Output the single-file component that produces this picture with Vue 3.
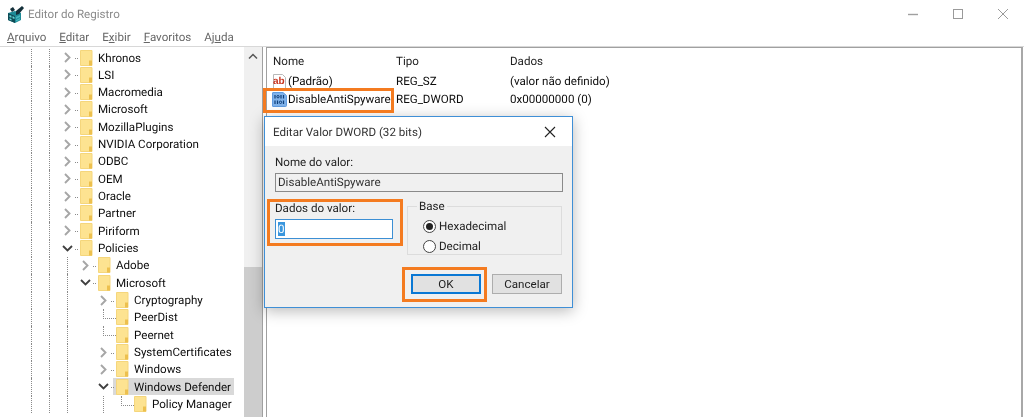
<script setup>
const menus = [
  { key: 'A', rest: 'rquivo' },
  { key: 'E', rest: 'ditar' },
  { pre: 'E', key: 'x', rest: 'ibir' },
  { key: 'F', rest: 'avoritos' },
  { pre: 'Aj', key: 'u', rest: 'da' }
]
const base = [true, true]
const sub = [true, true, true]
const deep = [true, true, true, false]
const rows = [
  { name: 'Khronos', g: base, c: 'r' },
  { name: 'LSI', g: base, c: 'r' },
  { name: 'Macromedia', g: base, c: 'r' },
  { name: 'Microsoft', g: base, c: 'r' },
  { name: 'MozillaPlugins', g: base, c: 'r' },
  { name: 'NVIDIA Corporation', g: base, c: 'r' },
  { name: 'ODBC', g: base, c: 'r' },
  { name: 'OEM', g: base, c: 'r' },
  { name: 'Oracle', g: base, c: 'r' },
  { name: 'Partner', g: base, c: 'r' },
  { name: 'Piriform', g: base, c: 'r' },
  { name: 'Policies', g: base, c: 'd' },
  { name: 'Adobe', g: sub, c: 'r' },
  { name: 'Microsoft', g: sub, c: 'd' },
  { name: 'Cryptography', g: deep, c: 'r' },
  { name: 'PeerDist', g: deep, c: 'l' },
  { name: 'Peernet', g: deep, c: 'l' },
  { name: 'SystemCertificates', g: deep, c: 'r' },
  { name: 'Windows', g: deep, c: 'r' },
  { name: 'Windows Defender', g: deep, c: 'd', sel: true },
  { name: 'Policy Manager', g: [true, true, true, false, true], c: 'l' }
]
</script>

<template>
  <div class="win">
    <header class="title">
      <svg class="app-icon" width="18" height="18" viewBox="0 0 18 18">
        <path d="M1 8l7-2 6 2v7l-6 3-7-3z" fill="#1d8a96" />
        <path d="M1 8l7 3v7l-7-3z" fill="#0e4a55" />
        <path d="M2.500 10l2 .8v2l-2-.8zM5.500 11.200l2 .8v2l-2-.8zM2.500 13.200l2 .8v1.600l-2-.8z" fill="#63d6d6" />
        <path d="M9 12l4-2v2l-4 2zM9 15l4-2v1.500l-4 2z" fill="#45b6bd" />
        <path d="M9 6l6-5 2 2-5 6-3 1z" fill="#14303a" />
        <path d="M3 4l3-2 2 3-3 2z" fill="#14303a" />
      </svg>
      <span class="title-text">Editor do Registro</span>
      <div class="controls">
        <svg width="12" height="12" viewBox="0 0 12 12"><path d="M1 6.500h10" stroke="#a0a0a0" stroke-width="1.400" /></svg>
        <svg width="12" height="12" viewBox="0 0 12 12"><rect x="1.500" y="1.500" width="9" height="9" fill="none" stroke="#9a9a9a" /></svg>
        <svg width="12" height="12" viewBox="0 0 12 12"><path d="M1 1l10 10M11 1L1 11" stroke="#9a9a9a" /></svg>
      </div>
    </header>

    <nav class="menu">
      <span v-for="m in menus" :key="m.rest">{{ m.pre }}<u>{{ m.key }}</u>{{ m.rest }}</span>
    </nav>

    <main class="panes">
      <section class="tree">
        <div class="tree-rows">
          <div v-for="(r, i) in rows" :key="i" class="row">
            <span v-for="(on, j) in r.g" :key="j" class="cell" :class="{ guide: on }"></span>
            <span class="cell twist">
              <svg v-if="r.c === 'r'" width="9" height="11" viewBox="0 0 9 11"><path d="M2 1l4.500 4.500L2 10" fill="none" stroke="#a6a6a6" stroke-width="1.900" /></svg>
              <svg v-else-if="r.c === 'd'" width="11" height="9" viewBox="0 0 11 9"><path d="M1 2l4.500 4.500L10 2" fill="none" stroke="#404040" stroke-width="1.800" /></svg>
              <span v-else class="elbow"></span>
              <span v-if="r.c !== 'l'" class="stub"></span>
            </span>
            <span class="node" :class="{ sel: r.sel }">
              <svg class="folder" width="13" height="16" viewBox="0 0 13 16">
                <path d="M.5.500h11.500v15H.5z" fill="#fde391" stroke="#f5d67c" />
                <path d="M9 10.500h3v5H9z" fill="#edc04e" />
              </svg>
              <span class="label">{{ r.name }}</span>
            </span>
          </div>
        </div>
        <div class="scroll">
          <svg width="10" height="7" viewBox="0 0 10 7" class="up"><path d="M1 5.500l4-4 4 4" fill="none" stroke="#555" stroke-width="1.500" /></svg>
          <div class="thumb"></div>
        </div>
      </section>

      <section class="list">
        <div class="head">
          <span class="c1">Nome</span>
          <span class="c2">Tipo</span>
          <span class="c3">Dados</span>
        </div>
        <div class="item">
          <span class="c1 name">
            <svg width="15" height="15" viewBox="0 0 15 15">
              <path d="M1.500.500h9l3 3v11h-12z" fill="#fff" stroke="#b8b8b8" />
              <text x="1" y="10" class="ab">ab</text>
            </svg>
            (Padrão)
          </span>
          <span class="c2">REG_SZ</span>
          <span class="c3">(valor não definido)</span>
        </div>
        <div class="item">
          <span class="c1 name">
            <svg width="15" height="15" viewBox="0 0 15 15">
              <path d="M1 .5h10l3.500 3v10a1 1 0 0 1-1 1H1a.5.5 0 0 1-.5-.5V1A.5.5 0 0 1 1 .5z" fill="#7fb2ea" stroke="#5f9be0" />
              <path d="M3 3v3.500M9 3v3.500M11.500 3v3.500M3 8.500V12M5.500 8.500V12M11.500 8.500V12" stroke="#10407a" stroke-width="1.200" />
              <circle cx="6" cy="4.700" r="1.200" fill="none" stroke="#10407a" />
              <circle cx="8.500" cy="10.300" r="1.200" fill="none" stroke="#10407a" />
            </svg>
            DisableAntiSpyware
          </span>
          <span class="c2">REG_DWORD</span>
          <span class="c3">0x00000000 (0)</span>
        </div>
      </section>
    </main>

    <div class="dialog">
      <div class="d-title">
        <span>Editar Valor DWORD (32 bits)</span>
        <svg width="12" height="12" viewBox="0 0 12 12"><path d="M1 1l10 10M11 1L1 11" stroke="#222" stroke-width="1.100" /></svg>
      </div>
      <div class="d-body">
        <label class="lbl">Nome do valor:</label>
        <div class="ro">DisableAntiSpyware</div>
        <div class="mid">
          <div class="data">
            <label class="lbl">Dados do valor:</label>
            <div class="inp"><span class="selected">0</span></div>
          </div>
          <fieldset class="base">
            <legend>Base</legend>
            <div class="radio"><i class="dot on"></i>Hexadecimal</div>
            <div class="radio"><i class="dot"></i>Decimal</div>
          </fieldset>
        </div>
        <div class="btns">
          <button class="btn primary">OK</button>
          <button class="btn">Cancelar</button>
        </div>
      </div>
    </div>

    <div class="mark m1"></div>
    <div class="mark m2"></div>
    <div class="mark m3"></div>
  </div>
</template>

<style>
html, body { margin: 0; background: #fff; }
</style>

<style scoped>
.win {
  position: relative;
  width: 1024px;
  height: 417px;
  overflow: hidden;
  background: #fff;
  font-family: Roboto, "Open Sans", sans-serif;
  font-size: 11.600px;
  text-rendering: geometricPrecision;
  color: #0c0c0c;
  display: flex;
  flex-direction: column;
  filter: blur(.3px);
}
.title {
  height: 27px;
  display: flex;
  align-items: center;
  padding-left: 7px;
  flex: none;
}
.title-text { margin-left: 3px; color: #8a8a8a; }
.controls {
  margin-left: auto;
  display: flex;
  gap: 33px;
  padding-right: 15px;
}
.menu {
  height: 19px;
  flex: none;
  display: flex;
  gap: 13px;
  padding-left: 7px;
  align-items: center;
  color: #666;
}
.panes {
  flex: 1;
  display: flex;
  min-height: 0;
  border-top: 1px solid #d8d8d8;
}
.tree {
  width: 262px;
  flex: none;
  display: flex;
  border-right: 1px solid #a0a0a0;
  margin-right: 3px;
  overflow: hidden;
}
.tree-rows {
  flex: 1;
  padding: 2px 0 0 22px;
  overflow: hidden;
  min-width: 0;
}
.row {
  height: 17.330px;
  display: flex;
  align-items: stretch;
  white-space: nowrap;
}
.cell {
  width: 18px;
  flex: none;
  position: relative;
  display: flex;
  align-items: center;
  justify-content: center;
}
.guide::before {
  content: "";
  position: absolute;
  left: 9px;
  top: 0;
  bottom: 0;
  border-left: 1px dotted #8a8a8a;
}
.stub {
  position: absolute;
  left: 17px;
  top: 9px;
  width: 3px;
  border-top: 1px dotted #8a8a8a;
}
.elbow {
  position: absolute;
  left: 9px;
  top: 0;
  height: 9px;
  width: 12px;
  border-left: 1px dotted #8a8a8a;
  border-bottom: 1px dotted #8a8a8a;
}
.node {
  display: flex;
  align-items: center;
  margin-left: 1px;
  padding-left: 3px;
  padding-right: 3px;
  height: 17px;
}
.node.sel { background: #d9d9d9; }
.folder { flex: none; }
.label { margin-left: 5px; }
.scroll {
  width: 18px;
  flex: none;
  background: #f0f0f0;
  display: flex;
  flex-direction: column;
  align-items: center;
}
.up { margin: 6px 0 0; flex: none; }
.thumb {
  margin-top: 207px;
  width: 100%;
  flex: 1;
  background: #cdcdcd;
}
.list {
  flex: 1;
  border-left: 1px solid #a0a0a0;
  border-right: 2px solid #a8a8a8;
  margin-right: 1px;
  border-top: 1px solid #a0a0a0;
  padding-top: 2px;
}
.head, .item {
  display: flex;
  align-items: center;
  height: 18px;
}
.head { height: 22px; color: #222; }
.c1 { width: 122px; padding-left: 6px; box-sizing: border-box; flex: none; }
.c2 { width: 114px; flex: none; padding-left: 7px; box-sizing: border-box; }
.c3 { flex: none; padding-left: 7px; }
.name { display: flex; align-items: center; gap: 1px; white-space: nowrap; padding-left: 5px; }
.name svg { flex: none; }
.ab { font: bold 10px "Liberation Sans", sans-serif; fill: #c8341e; }
.dialog {
  position: absolute;
  left: 264px;
  top: 116px;
  width: 309px;
  height: 192px;
  box-sizing: border-box;
  border: 1px solid #3f8fd6;
  background: #f0f0f0;
  box-shadow: 0 3px 14px rgba(0, 0, 0, .28);
  display: flex;
  flex-direction: column;
}
.d-title {
  height: 29px;
  flex: none;
  background: #fff;
  display: flex;
  align-items: center;
  justify-content: space-between;
  padding: 0 16px 0 8px;
  color: #333;
}
.d-body {
  flex: 1;
  padding: 8px 9px 0 10px;
  display: flex;
  flex-direction: column;
}
.lbl { display: block; line-height: 16px; color: #222; }
.ro {
  margin-top: 3px;
  height: 19px;
  box-sizing: border-box;
  border: 1px solid #8a8a8a;
  background: #f0f0f0;
  line-height: 17px;
  padding-left: 2px;
  color: #333;
}
.mid {
  display: flex;
  margin-top: 8px;
}
.data { width: 132px; flex: none; }
.inp {
  margin-top: 3px;
  width: 118px;
  height: 20px;
  box-sizing: border-box;
  border: 1px solid #3c8fd4;
  background: #fff;
  line-height: 18px;
  padding-left: 2px;
}
.selected { background: #3a96dd; color: #fff; }
.base {
  margin: -1px 0 0;
  width: 155px;
  height: 56px;
  box-sizing: border-box;
  border: 1px solid #dcdcdc;
  padding: 3px 0 0 15px;
  min-width: 0;
}
.base legend { padding: 0 2px; margin-left: -6px; color: #222; line-height: 14px; }
.radio {
  display: flex;
  align-items: center;
  height: 20px;
  gap: 3px;
  color: #222;
}
.dot {
  width: 13px;
  height: 13px;
  box-sizing: border-box;
  border: 1px solid #444;
  border-radius: 50%;
  background: #fff;
  position: relative;
}
.dot.on::after {
  content: "";
  position: absolute;
  inset: 2px;
  border-radius: 50%;
  background: #222;
}
.btns {
  display: flex;
  justify-content: flex-end;
  gap: 11px;
  margin-top: 19px;
  padding-right: 1px;
}
.btn {
  width: 70px;
  height: 20px;
  box-sizing: border-box;
  border: 1px solid #adadad;
  background: #e1e1e1;
  font: inherit;
  color: #222;
  padding: 0;
}
.btn.primary { border: 2px solid #0a78d4; }
.mark {
  position: absolute;
  box-sizing: border-box;
  border: 3px solid #f47b20;
  pointer-events: none;
}
.m1 { left: 263px; top: 88px; width: 131px; height: 25px; }
.m2 { left: 267px; top: 199px; width: 136px; height: 47px; }
.m3 { left: 402px; top: 267px; width: 85px; height: 35px; }
</style>
